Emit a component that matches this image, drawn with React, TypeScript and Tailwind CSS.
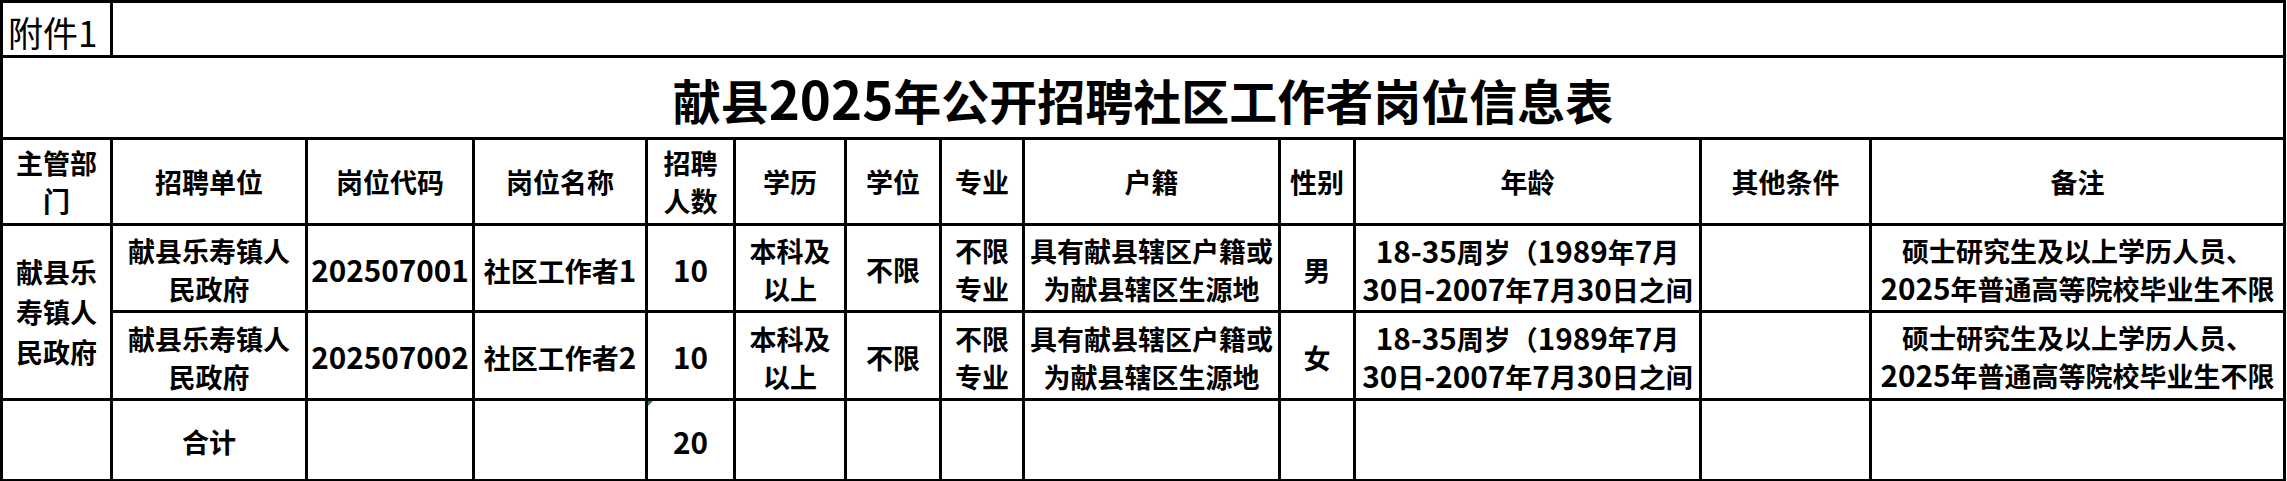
import React from "react";

// column widths measured off the sheet (border centre to border centre)
const colWidths = [110, 195, 167, 173, 88, 111, 95, 83, 256, 75, 346, 170, 414];

// the Latin digits in the sheet font sit a little larger than the CJK glyphs
const Txt = ({ text }: { text: string }) => {
  const parts = text.split(/([0-9\-]+)/);
  return (
    <>
      {parts.map((p, i) =>
        /^[0-9\-]+$/.test(p) ? (
          <span key={i} className="text-[1.1em]">
            {p}
          </span>
        ) : (
          <React.Fragment key={i}>{p}</React.Fragment>
        )
      )}
    </>
  );
};

const Lines = ({ lines }: { lines: string[] }) => (
  <>
    {lines.map((l, i) => (
      <div key={i} className="whitespace-nowrap">
        <Txt text={l} />
      </div>
    ))}
  </>
);

const Td = ({
  children,
  colSpan,
  rowSpan,
  box,
}: {
  children?: React.ReactNode;
  colSpan?: number;
  rowSpan?: number;
  box: string;
}) => (
  <td colSpan={colSpan} rowSpan={rowSpan} className="border-[3px] border-black p-0 align-top">
    <div className={box}>{children}</div>
  </td>
);

const headBox = "h-[83px] flex flex-col items-center justify-center text-center leading-[38px]";
const rowBox = "h-[84px] pt-1 flex flex-col items-center justify-center text-center leading-[38px]";
const rowBox2 = "h-[85px] pt-1 flex flex-col items-center justify-center text-center leading-[38px]";
// cells whose text is longer than the row: Excel shows them from the top and clips the rest
const clipBox = "h-[84px] pt-[6px] overflow-hidden flex flex-col items-center text-center leading-[37px]";
const clipBox2 = "h-[85px] pt-[6px] overflow-hidden flex flex-col items-center text-center leading-[37px]";
const totalBox = "h-[78px] pt-1 flex flex-col items-center justify-center text-center leading-[38px]";

const headers: string[][] = [
  ["主管部", "门"],
  ["招聘单位"],
  ["岗位代码"],
  ["岗位名称"],
  ["招聘", "人数"],
  ["学历"],
  ["学位"],
  ["专业"],
  ["户籍"],
  ["性别"],
  ["年龄"],
  ["其他条件"],
  ["备注"],
];

const jobs = [
  { code: "202507001", name: "社区工作者1", sex: "男" },
  { code: "202507002", name: "社区工作者2", sex: "女" },
];

const App = () => {
  return (
    <div className="w-[2287px] h-[481px] bg-white text-black font-['Noto_Sans_CJK_SC',sans-serif] overflow-hidden">
      <table className="table-fixed border-collapse w-[2286px]">
        <colgroup>
          {colWidths.map((w, i) => (
            <col key={i} style={{ width: w }} />
          ))}
        </colgroup>
        <tbody>
          {/* 附件 row */}
          <tr>
            <Td box="h-[52px] flex items-center pl-[5px] pt-[4px] text-[35px] font-normal leading-none">
              附件1
            </Td>
            <Td colSpan={12} box="h-[52px]" />
          </tr>

          {/* title */}
          <tr>
            <Td colSpan={13} box="h-[79px] flex items-center justify-center text-[48px] font-bold leading-none">
              <span className="whitespace-nowrap">
                <Txt text="献县2025年公开招聘社区工作者岗位信息表" />
              </span>
            </Td>
          </tr>

          {/* header */}
          <tr className="text-[27px] font-bold">
            {headers.map((h, i) => (
              <Td key={i} box={headBox}>
                <Lines lines={h} />
              </Td>
            ))}
          </tr>

          {/* job rows */}
          {jobs.map((job, idx) => {
            const box = idx === 0 ? rowBox : rowBox2;
            const clip = idx === 0 ? clipBox : clipBox2;
            return (
              <tr key={job.code} className="text-[27px] font-bold">
                {idx === 0 && (
                  <Td
                    rowSpan={2}
                    box="h-[172px] flex flex-col items-center justify-center text-center leading-[40px]"
                  >
                    <Lines lines={["献县乐", "寿镇人", "民政府"]} />
                  </Td>
                )}
                <Td box={box}>
                  <Lines lines={["献县乐寿镇人", "民政府"]} />
                </Td>
                <Td box={box}>
                  <Lines lines={[job.code]} />
                </Td>
                <Td box={box}>
                  <Lines lines={[job.name]} />
                </Td>
                <Td box={box}>
                  <Lines lines={["10"]} />
                </Td>
                <Td box={box}>
                  <Lines lines={["本科及", "以上"]} />
                </Td>
                <Td box={box}>
                  <Lines lines={["不限"]} />
                </Td>
                <Td box={box}>
                  <Lines lines={["不限", "专业"]} />
                </Td>
                <Td box={box}>
                  <Lines lines={["具有献县辖区户籍或", "为献县辖区生源地"]} />
                </Td>
                <Td box={box}>
                  <Lines lines={[job.sex]} />
                </Td>
                <Td box={clip}>
                  <Lines lines={["18-35周岁（1989年7月", "30日-2007年7月30日之间", "出生）"]} />
                </Td>
                <Td box={box} />
                <Td box={clip}>
                  <Lines lines={["硕士研究生及以上学历人员、", "2025年普通高等院校毕业生不限", "户籍"]} />
                </Td>
              </tr>
            );
          })}

          {/* total */}
          <tr className="text-[27px] font-bold">
            <Td box={totalBox} />
            <Td box={totalBox}>
              <Lines lines={["合计"]} />
            </Td>
            <Td box={totalBox} />
            <Td box={totalBox} />
            <td className="border-[3px] border-black p-0 align-top">
              <div className={totalBox + " relative"}>
                <span className="absolute left-0 top-0 w-0 h-0 border-t-[5px] border-t-[#1e8a3c] border-r-[5px] border-r-transparent" />
                <Lines lines={["20"]} />
              </div>
            </td>
            {Array.from({ length: 8 }).map((_, i) => (
              <Td key={i} box={totalBox} />
            ))}
          </tr>
        </tbody>
      </table>
    </div>
  );
};

export default App;
